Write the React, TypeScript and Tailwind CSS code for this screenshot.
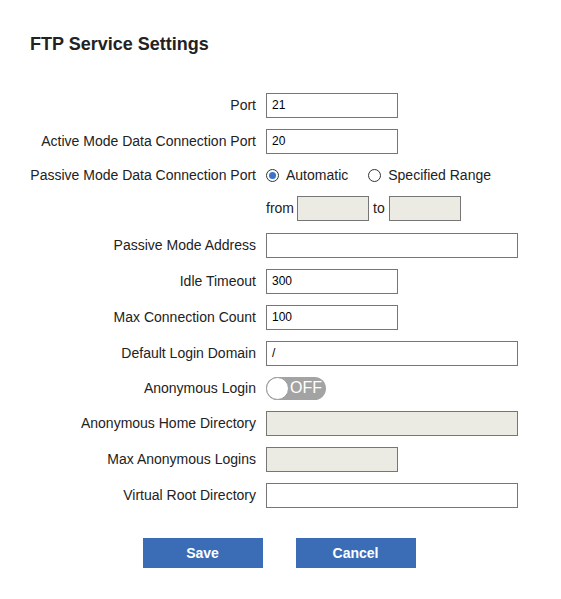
import React from "react";

const font = { fontFamily: '"Liberation Sans", Arial, sans-serif' };

function Row({
  label,
  h = "h-[36px]",
  children,
}: {
  label?: string;
  h?: string;
  children: React.ReactNode;
}) {
  return (
    <div className={`flex items-center ${h}`}>
      <div className="w-[256px] shrink-0 text-right text-[14px] text-[#222]">
        {label}
      </div>
      <div className="ml-[10px] flex items-center">{children}</div>
    </div>
  );
}

function TextBox({
  value = "",
  wide = false,
  disabled = false,
}: {
  value?: string;
  wide?: boolean;
  disabled?: boolean;
}) {
  return (
    <div
      className={`flex h-[25px] items-center border border-[#767676] px-[5px] text-[12px] text-black ${
        wide ? "w-[252px]" : "w-[132px]"
      } ${disabled ? "bg-[#ebebe4]" : "bg-white"}`}
    >
      {value}
    </div>
  );
}

function Radio({ checked }: { checked?: boolean }) {
  return (
    <span className="flex h-[13px] w-[13px] items-center justify-center rounded-full border border-[#333] bg-white">
      {checked && <span className="h-[7px] w-[7px] rounded-full bg-[#3b74c8]" />}
    </span>
  );
}

export default function App() {
  return (
    <div className="min-h-screen w-[561px] bg-white" style={font}>
      <h1 className="pl-[30px] pt-[31px] text-[18px] font-bold text-[#222]">
        FTP Service Settings
      </h1>
      <div className="mt-[29px]">
        <Row label="Port">
          <TextBox value="21" />
        </Row>
        <Row label="Active Mode Data Connection Port">
          <TextBox value="20" />
        </Row>
        <Row label="Passive Mode Data Connection Port" h="h-[32px]">
          <div className="flex items-center text-[14px] text-[#222]">
            <Radio checked />
            <span className="ml-[7px]">Automatic</span>
            <span className="ml-[20px]">
              <Radio />
            </span>
            <span className="ml-[7px]">Specified Range</span>
          </div>
        </Row>
        <Row h="h-[34px]">
          <div className="flex items-center text-[14px] text-[#222]">
            <span>from</span>
            <div className="ml-[3px] h-[25px] w-[72px] border border-[#767676] bg-[#ebebe4]" />
            <span className="ml-[4px]">to</span>
            <div className="ml-[4px] h-[25px] w-[72px] border border-[#767676] bg-[#ebebe4]" />
          </div>
        </Row>
        <div className="h-[2px]" />
        <Row label="Passive Mode Address">
          <TextBox wide />
        </Row>
        <Row label="Idle Timeout">
          <TextBox value="300" />
        </Row>
        <Row label="Max Connection Count">
          <TextBox value="100" />
        </Row>
        <Row label="Default Login Domain">
          <TextBox value="/" wide />
        </Row>
        <Row label="Anonymous Login" h="h-[34px]">
          <div className="flex h-[23px] w-[60px] items-center rounded-full bg-[#a3a3a3]">
            <span className="h-[23px] w-[23px] rounded-full border border-[#999] bg-white" />
            <span className="ml-[1px] text-[16px] leading-none text-white">OFF</span>
          </div>
        </Row>
        <Row label="Anonymous Home Directory">
          <TextBox wide disabled />
        </Row>
        <Row label="Max Anonymous Logins">
          <TextBox disabled />
        </Row>
        <Row label="Virtual Root Directory">
          <TextBox wide />
        </Row>
      </div>
      <div className="mt-[25px] flex justify-center gap-[33px] pr-[3px]">
        <button className="h-[30px] w-[120px] bg-[#3a6db6] text-[14px] font-bold text-white">
          Save
        </button>
        <button className="h-[30px] w-[120px] bg-[#3a6db6] text-[14px] font-bold text-white">
          Cancel
        </button>
      </div>
    </div>
  );
}
